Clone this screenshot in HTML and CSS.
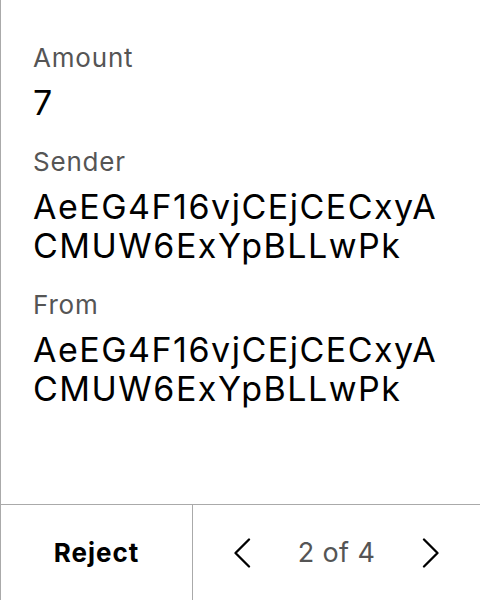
FILE: index.html
```html
<!DOCTYPE html>
<html>
<head>
<meta charset="utf-8">
<link rel="stylesheet" href="styles.css">
</head>
<body>
<div class="panel">
  <div class="content">
    <div class="field">
      <div class="label">Amount</div>
      <div class="value">7</div>
    </div>
    <div class="field">
      <div class="label">Sender</div>
      <div class="value">AeEG4F16vjCEjCECxyACMUW6ExYpBLLwPk</div>
    </div>
    <div class="field">
      <div class="label">From</div>
      <div class="value">AeEG4F16vjCEjCECxyACMUW6ExYpBLLwPk</div>
    </div>
  </div>
  <div class="footer">
    <div class="reject">Reject</div>
    <div class="pager">
      <svg class="chev" width="18" height="30" viewBox="0 0 18 30"><path d="M16 1.5 L2.5 15 L16 28.5" fill="none" stroke="#000" stroke-width="2.3" stroke-linecap="round" stroke-linejoin="round"/></svg>
      <span class="count">2 of 4</span>
      <svg class="chev" width="18" height="30" viewBox="0 0 18 30"><path d="M2 1.5 L15.5 15 L2 28.5" fill="none" stroke="#000" stroke-width="2.3" stroke-linecap="round" stroke-linejoin="round"/></svg>
    </div>
  </div>
</div>
</body>
</html>
```

FILE: styles.css
```css
html, body {
  margin: 0;
  padding: 0;
  background: #fff;
}
body {
  font-family: Inter, "Noto Sans", sans-serif;
}
.panel {
  width: 479px;
  height: 600px;
  border-left: 1px solid #aaa;
  display: flex;
  flex-direction: column;
}
.content {
  flex: 1;
  padding: 42px 32px 0 32px;
  display: flex;
  flex-direction: column;
  gap: 24px;
}
.label {
  font-size: 26px;
  line-height: 32px;
  letter-spacing: 0.8px;
  color: #555;
}
.value {
  font-size: 34px;
  line-height: 39px;
  letter-spacing: 1.5px;
  color: #000;
  word-break: break-all;
  margin-top: 9px;
}
.footer {
  height: 95px;
  border-top: 1px solid #aaa;
  display: flex;
}
.reject {
  width: 191px;
  border-right: 1px solid #aaa;
  display: flex;
  align-items: center;
  justify-content: center;
  font-size: 26px;
  font-weight: 700;
  letter-spacing: 1px;
  color: #000;
}
.pager {
  flex: 1;
  display: flex;
  align-items: center;
  justify-content: center;
  gap: 47px;
}
.count {
  font-size: 27px;
  letter-spacing: 0.4px;
  color: #555;
}
```
